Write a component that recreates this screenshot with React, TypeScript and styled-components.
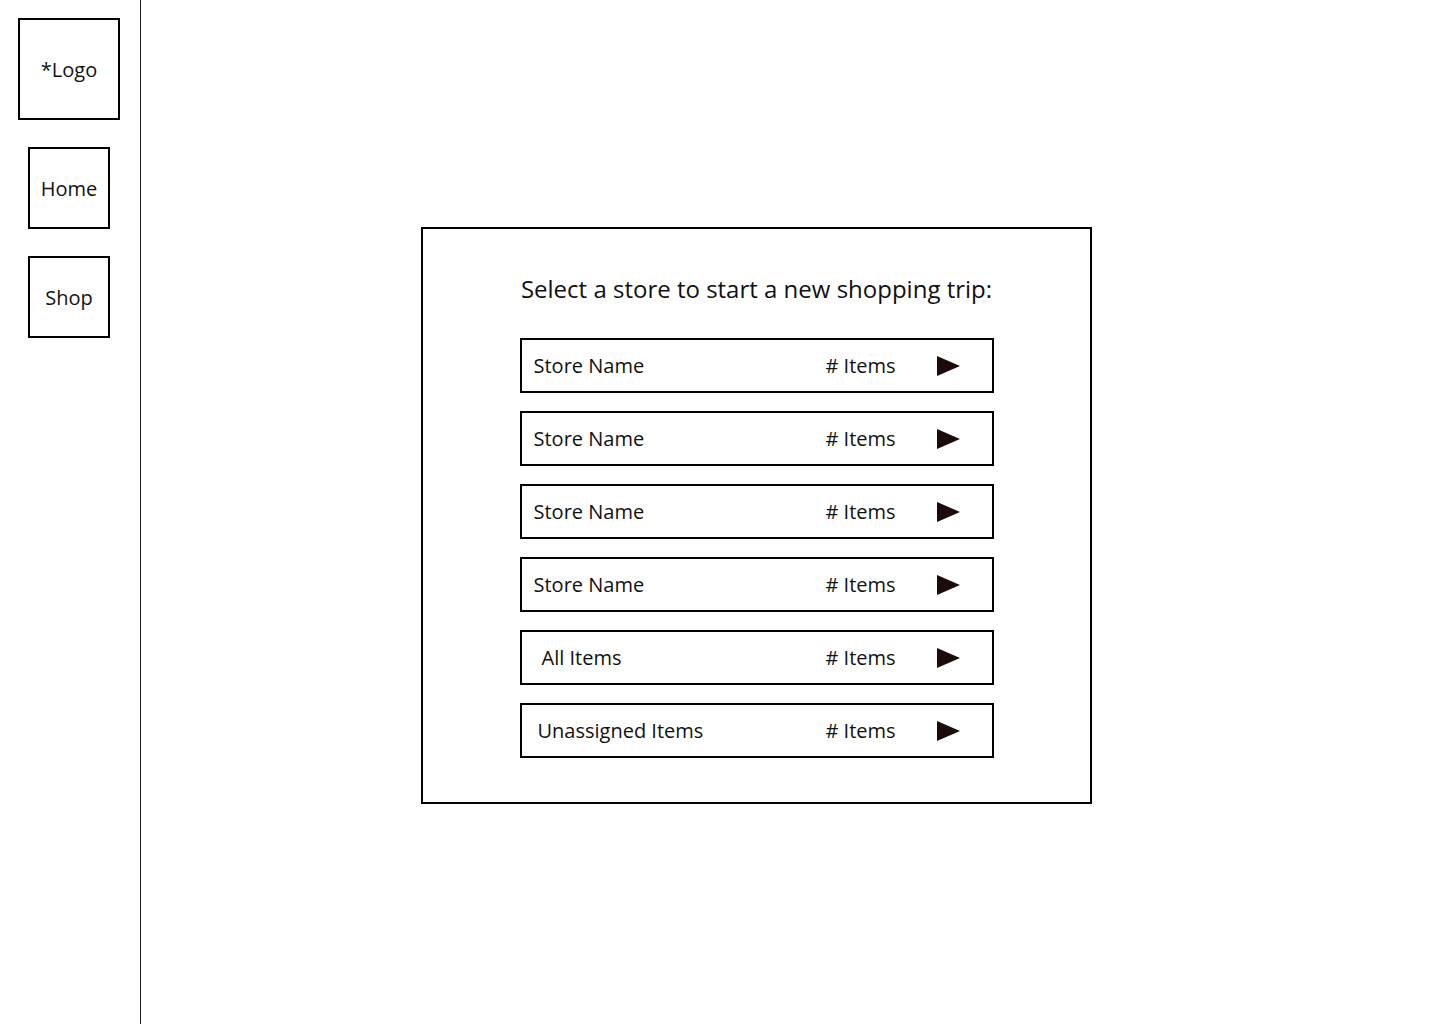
import styled, { createGlobalStyle } from "styled-components";

const GlobalStyle = createGlobalStyle`
  html, body {
    margin: 0;
    padding: 0;
    background: #ffffff;
    font-family: "Open Sans", "Liberation Sans", sans-serif;
    color: #111111;
  }
`;

const Page = styled.div`
  display: flex;
  min-height: 1024px;
`;

const Sidebar = styled.nav`
  width: 141px;
  flex-shrink: 0;
  border-right: 1px solid #1a1a1a;
  display: flex;
  flex-direction: column;
  align-items: flex-start;
  gap: 27px;
  padding: 18px 0 0 18px;
  box-sizing: border-box;
`;

const NavBox = styled.div<{ size: number; inset?: number }>`
  width: ${(p) => p.size}px;
  height: ${(p) => p.size}px;
  margin-left: ${(p) => p.inset ?? 0}px;
  border: 2px solid #000;
  box-sizing: border-box;
  display: flex;
  align-items: center;
  justify-content: center;
  font-size: 20px;
`;

const Main = styled.main`
  flex: 1;
  padding: 227px 0 0 280px;
`;

const Panel = styled.section`
  width: 671px;
  border: 2px solid #000;
  box-sizing: border-box;
  display: flex;
  flex-direction: column;
  align-items: center;
  padding: 43px 0 44px;
`;

const Title = styled.h1`
  margin: 0 0 33px;
  font-size: 24px;
  font-weight: 400;
  line-height: 33px;
`;

const List = styled.div`
  display: flex;
  flex-direction: column;
  gap: 18px;
`;

const Row = styled.div<{ indent: number }>`
  width: 474px;
  height: 55px;
  border: 2px solid #000;
  box-sizing: border-box;
  display: grid;
  grid-template-columns: 1fr 111px 23px;
  align-items: center;
  padding: 0 32px 0 ${(p) => p.indent}px;
  font-size: 20px;
`;

const Label = styled.span``;

const Count = styled.span``;

const Arrow = () => (
  <svg width="23" height="20" viewBox="0 0 23 20">
    <polygon points="0,0 23,10 0,20" fill="#1b0b0b" />
  </svg>
);

const stores = [
  { name: "Store Name", indent: 12 },
  { name: "Store Name", indent: 12 },
  { name: "Store Name", indent: 12 },
  { name: "Store Name", indent: 12 },
  { name: "All Items", indent: 20 },
  { name: "Unassigned Items", indent: 16 },
];

export default function App() {
  return (
    <>
      <GlobalStyle />
      <Page>
        <Sidebar>
          <NavBox size={102}>*Logo</NavBox>
          <NavBox size={82} inset={10}>Home</NavBox>
          <NavBox size={82} inset={10}>Shop</NavBox>
        </Sidebar>
        <Main>
          <Panel>
            <Title>Select a store to start a new shopping trip:</Title>
            <List>
              {stores.map((s, i) => (
                <Row key={i} indent={s.indent}>
                  <Label>{s.name}</Label>
                  <Count># Items</Count>
                  <Arrow />
                </Row>
              ))}
            </List>
          </Panel>
        </Main>
      </Page>
    </>
  );
}
